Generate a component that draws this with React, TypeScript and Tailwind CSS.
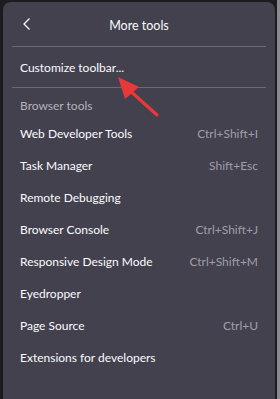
import React from "react";

const items: [string, string][] = [
  ["Web Developer Tools", "Ctrl+Shift+I"],
  ["Task Manager", "Shift+Esc"],
  ["Remote Debugging", ""],
  ["Browser Console", "Ctrl+Shift+J"],
  ["Responsive Design Mode", "Ctrl+Shift+M"],
  ["Eyedropper", ""],
  ["Page Source", "Ctrl+U"],
  ["Extensions for developers", ""],
];

export default function App() {
  return (
    <div
      className="relative w-[280px] h-[399px] overflow-hidden bg-[#1c1b22] flex"
      style={{ fontFamily: 'Lato, "Open Sans", sans-serif' }}
    >
      <div className="w-[3px] shrink-0" />
      <div className="mt-[2px] w-[272px] h-[420px] shrink-0 rounded-[8px] bg-[#42414d] text-[#fbfbfe] text-[12px]">
        <div className="h-[44px] flex items-center relative">
          <svg
            className="absolute left-[19px] top-[15px]"
            width="10"
            height="14"
            viewBox="0 0 10 14"
          >
            <path d="M7.5 1.5 L2 7 L7.5 12.5" fill="none" stroke="#fbfbfe" strokeWidth="1.3" />
          </svg>
          <div className="w-full text-center pt-[5px] text-[12.5px]">More tools</div>
        </div>
        <div className="mx-[9px] h-px bg-[#6b6a75]" />
        <div className="h-[40px] flex items-center px-[17px] pt-[2px]">Customize toolbar...</div>
        <div className="mx-[9px] h-px bg-[#6b6a75]" />
        <div className="pt-[5px]">
          <div className="h-[25px] flex items-center px-[17px] text-[#b4b3bb]">Browser tools</div>
          {items.map(([label, sc]) => (
            <div key={label} className="h-[32px] flex items-center justify-between px-[17px]">
              <span>{label}</span>
              <span className="text-[#a09fa8]">{sc}</span>
            </div>
          ))}
        </div>
      </div>
      <div className="w-[2px] shrink-0" />
      <div className="flex-1 bg-[#8b8a90]" />
      <svg className="absolute left-0 top-0 pointer-events-none" width="280" height="399">
        <line x1="157" y1="115" x2="127" y2="88" stroke="#e8383a" strokeWidth="3.2" strokeLinecap="round" />
        <polygon points="118,77 139,87 125,99" fill="#e8383a" />
      </svg>
    </div>
  );
}
